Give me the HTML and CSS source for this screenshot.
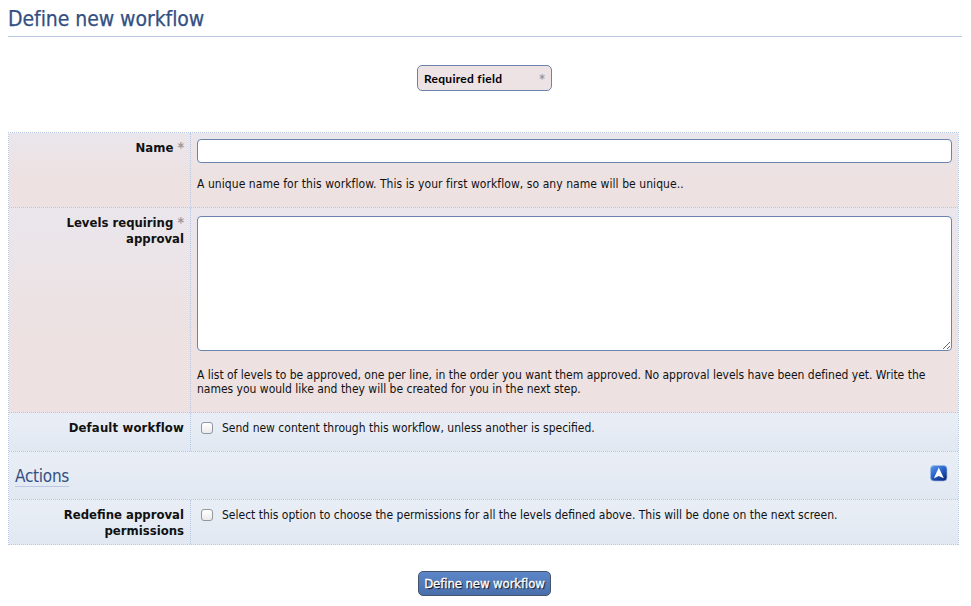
FILE: index.html
```html
<!DOCTYPE html>
<html lang="en">
<head>
<meta charset="utf-8">
<title>Define new workflow</title>
<link rel="stylesheet" href="styles.css">
</head>
<body>
<h1>Define new workflow</h1>
<div class="legend"><span>Required field</span><span class="star">*</span></div>
<form>
  <div class="table">
    <div class="row required name">
      <div class="label">Name <span class="star">*</span></div>
      <div class="field"><input class="text" type="text" aria-label="Name"><p>A unique name for this workflow. This is your first workflow, so any name will be unique..</p></div>
    </div>
    <div class="row required levels">
      <div class="label">Levels requiring <span class="star">*</span><br>approval</div>
      <div class="field"><textarea aria-label="Levels requiring approval"></textarea><p>A list of levels to be approved, one per line, in the order you want them approved. No approval levels have been defined yet. Write the<br>names you would like and they will be created for you in the next step.</p></div>
    </div>
    <div class="row default">
      <div class="label">Default workflow</div>
      <div class="field check"><input type="checkbox" aria-label="Default workflow"><span>Send new content through this workflow, unless another is specified.</span></div>
    </div>
    <div class="section">
      <h2>Actions</h2>
      <svg width="18" height="17" viewBox="0 0 18 17">
        <defs><linearGradient id="g" x1="0" y1="0" x2=".7" y2="1"><stop offset="0" stop-color="#5b9cec"/><stop offset=".5" stop-color="#2a66cc"/><stop offset="1" stop-color="#0d2c80"/></linearGradient></defs>
        <rect x=".5" y=".5" width="16.5" height="15.5" rx="3.5" fill="url(#g)" stroke="#9dbbe8" stroke-opacity=".7"/>
        <path d="M8.8 2.5 13.8 13.2 8.8 11 3.9 13.2Z" fill="#fff"/>
      </svg>
    </div>
    <div class="row redefine">
      <div class="label">Redefine approval<br>permissions</div>
      <div class="field check"><input type="checkbox" aria-label="Redefine approval permissions"><span>Select this option to choose the permissions for all the levels defined above. This will be done on the next screen.</span></div>
    </div>
  </div>
  <button type="button">Define new workflow</button>
</form>
</body>
</html>
```
FILE: styles.css
```css
* { box-sizing: border-box; }
body {
  margin: 0;
  padding: 0 9px 0 8px;
  height: 606px;
  overflow: hidden;
  background: #fff;
  color: #111;
  font: 12px/14px "DejaVu Sans Condensed", "DejaVu Sans", sans-serif;
  white-space: nowrap;
}
h1 {
  margin: 0;
  height: 37px;
  border-bottom: 1px solid #b9c9e4;
  color: #335082;
  font-size: 21px;
  font-weight: 400;
  line-height: 38px;
  letter-spacing: -0.06px;
  -webkit-text-stroke: 0.25px #335082;
}
.legend {
  display: flex;
  justify-content: space-between;
  width: 135px;
  height: 26px;
  margin: 28px 0 41px 409px;
  padding: 0 6px;
  border: 1px solid #6b83ad;
  border-radius: 5px;
  background: #ede2e4;
  font: bold 12px/26px Lato, sans-serif;
  letter-spacing: 0.28px;
  color: #000;
}
.star {
  color: #999;
  font-family: "DejaVu Sans Condensed", "DejaVu Sans", sans-serif;
  font-weight: 700;
  letter-spacing: 0;
}
.table {
  width: 951px;
  border: 1px dotted #b5c8e8;
  border-bottom: 0;
}
.row {
  display: grid;
  grid-template-columns: 182px 1fr;
  border-bottom: 1px dotted #b5c8e8;
  background: linear-gradient(#e9eef6, #e2e8f2);
}
.row.required { background: linear-gradient(#eae6ec, #ede1e1 65%); }
.name { height: 75px; }
.levels { height: 205px; }
.default { height: 39px; }
.redefine { height: 45px; }
.label {
  padding: 7px 6px 0 0;
  border-right: 1px dotted #b5c8e8;
  font-size: 13px;
  font-weight: 700;
  line-height: 16px;
  text-align: right;
}
.default .label { letter-spacing: 0.15px; }
.label .star { font-size: 14px; line-height: 1; }
.field { padding: 6px; }
.text, textarea {
  display: block;
  width: 755px;
  height: 24px;
  margin: 0;
  border: 1px solid #6b83ad;
  border-radius: 4px;
  background: #fff;
}
.levels .field { padding-top: 8px; }
textarea { height: 135px; }
p { margin: 14px 0 0; letter-spacing: 0.065px; }
.levels p { margin-top: 17px; letter-spacing: -0.01px; }
.check { display: flex; align-items: flex-start; padding: 8px 10px; }
.check input {
  appearance: none;
  width: 12px;
  height: 12px;
  margin: 1px 9px 0 0;
  border: 1px solid #92969d;
  border-radius: 3px;
  background: linear-gradient(#fff, #ebebeb);
}
.section {
  display: flex;
  justify-content: space-between;
  height: 48px;
  padding: 13px 10px 0 6px;
  border-bottom: 1px dotted #b5c8e8;
  background: linear-gradient(#e9eef6, #e2e8f2);
}
h2 {
  height: 22px;
  margin: 0;
  border-bottom: 1px solid #b9c9e4;
  color: #335082;
  font-size: 17px;
  font-weight: 400;
  line-height: 22px;
  letter-spacing: -0.25px;
}
button {
  display: block;
  width: 133px;
  height: 25px;
  margin: 26px 0 0 410px;
  padding: 0;
  border: 1px solid #44546f;
  border-radius: 5px;
  background: linear-gradient(#5c86c8, #4a6fab);
  color: #fff;
  font: 13px/23px "DejaVu Sans Condensed", "DejaVu Sans", sans-serif;
  letter-spacing: -0.08px;
  -webkit-text-stroke: 0.3px #fff;
  text-shadow: 1px 1px 1px #000;
}
```
